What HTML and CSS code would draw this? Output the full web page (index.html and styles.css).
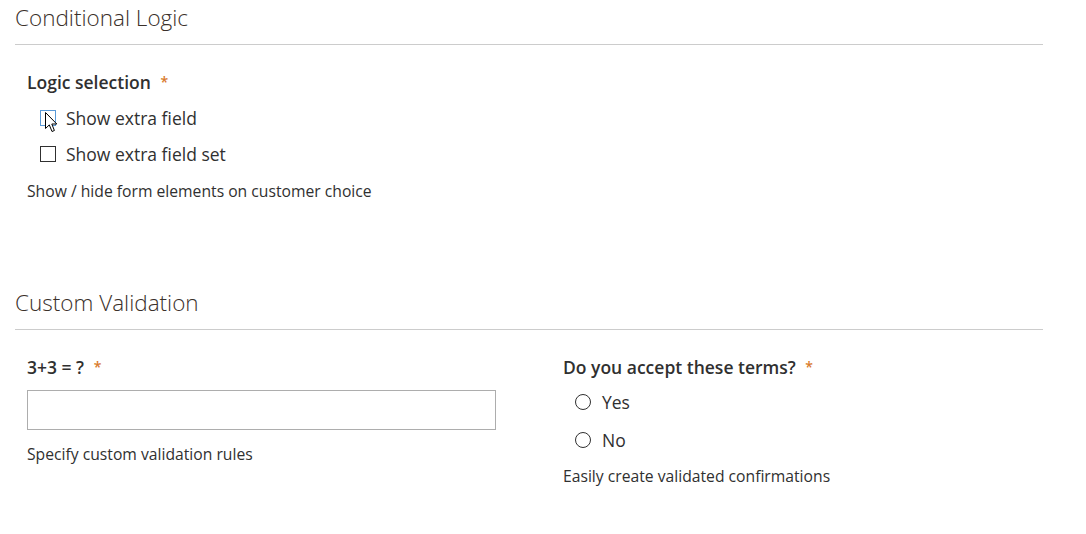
FILE: index.html
```html
<!DOCTYPE html>
<html>
<head>
<meta charset="utf-8">
<link rel="stylesheet" href="styles.css">
</head>
<body>
<div class="page">
  <section class="fieldset">
    <h2 class="legend">Conditional Logic</h2>
    <div class="fields single">
      <div class="field">
        <div class="label">Logic selection <span class="req">*</span></div>
        <div class="options checks">
          <label class="opt">
            <span class="box hover"></span>
            <span class="txt">Show extra field</span>
            <svg class="cursor" width="13" height="21" viewBox="0 0 13 21"><path d="M0.5 0.5 L0.5 16.5 L4.3 12.9 L7 19.5 L9.4 18.5 L6.8 12 L11.8 12 Z" fill="#fff" stroke="#000" stroke-width="1" stroke-linejoin="miter"/></svg>
          </label>
          <label class="opt">
            <span class="box"></span>
            <span class="txt">Show extra field set</span>
          </label>
        </div>
        <div class="note">Show / hide form elements on customer choice</div>
      </div>
    </div>
  </section>

  <section class="fieldset second">
    <h2 class="legend">Custom Validation</h2>
    <div class="fields cols">
      <div class="field">
        <div class="label">3+3 = ? <span class="req">*</span></div>
        <div class="input"></div>
        <div class="note note-input">Specify custom validation rules</div>
      </div>
      <div class="field">
        <div class="label">Do you accept these terms? <span class="req">*</span></div>
        <div class="options radios">
          <label class="opt radio-opt">
            <span class="circle"></span>
            <span class="txt">Yes</span>
          </label>
          <label class="opt radio-opt">
            <span class="circle"></span>
            <span class="txt">No</span>
          </label>
        </div>
        <div class="note note-radio">Easily create validated confirmations</div>
      </div>
    </div>
  </section>
</div>
</body>
</html>
```

FILE: styles.css
```css
* { box-sizing: border-box; }
html, body {
  margin: 0;
  padding: 0;
  background: #fff;
}
body {
  font-family: "Open Sans", "Noto Sans", sans-serif;
  color: #303030;
}
.page {
  width: 1043px;
  padding-left: 15px;
  padding-top: 3px;
}
.legend {
  margin: 0;
  font-size: 22.5px;
  font-weight: 300;
  line-height: 30px;
  color: #3a302a;
  padding-bottom: 11px;
  border-bottom: 1px solid #cccccc;
}
.fields {
  padding-left: 12px;
  padding-top: 25px;
}
.cols {
  display: grid;
  grid-template-columns: 536px 1fr;
}
.label {
  font-size: 17.5px;
  font-weight: 600;
  line-height: 24px;
  color: #303030;
}
.req {
  color: #d97a2b;
  font-size: 14px;
  font-weight: 600;
  margin-left: 5px;
  position: relative;
  top: -2px;
}
.options {
  display: flex;
  flex-direction: column;
}
.checks {
  padding-top: 10px;
  gap: 12px;
}
.opt {
  display: flex;
  align-items: center;
  height: 24px;
  position: relative;
  font-size: 17.5px;
  line-height: 24px;
  color: #303030;
}
.box {
  width: 16px;
  height: 16px;
  border: 1px solid #303030;
  margin-left: 13px;
  margin-right: 10px;
  background: #fff;
}
.box.hover {
  border-color: #5a9ad8;
}
.cursor {
  position: absolute;
  left: 18px;
  top: 6px;
}
.note {
  font-size: 15.7px;
  line-height: 20px;
  color: #303030;
}
.checks + .note {
  padding-top: 15px;
}
.second {
  margin-top: 87px;
}
.input {
  width: 469px;
  height: 40px;
  border: 1px solid #adadad;
  margin-top: 9px;
  background: #fff;
}
.note-input {
  margin-top: 14px;
}
.radios {
  padding-top: 9px;
  gap: 14px;
}
.circle {
  width: 16px;
  height: 16px;
  border: 1px solid #303030;
  border-radius: 50%;
  margin-left: 12px;
  margin-right: 11px;
}
.note-radio {
  margin-top: 14px;
}
```
